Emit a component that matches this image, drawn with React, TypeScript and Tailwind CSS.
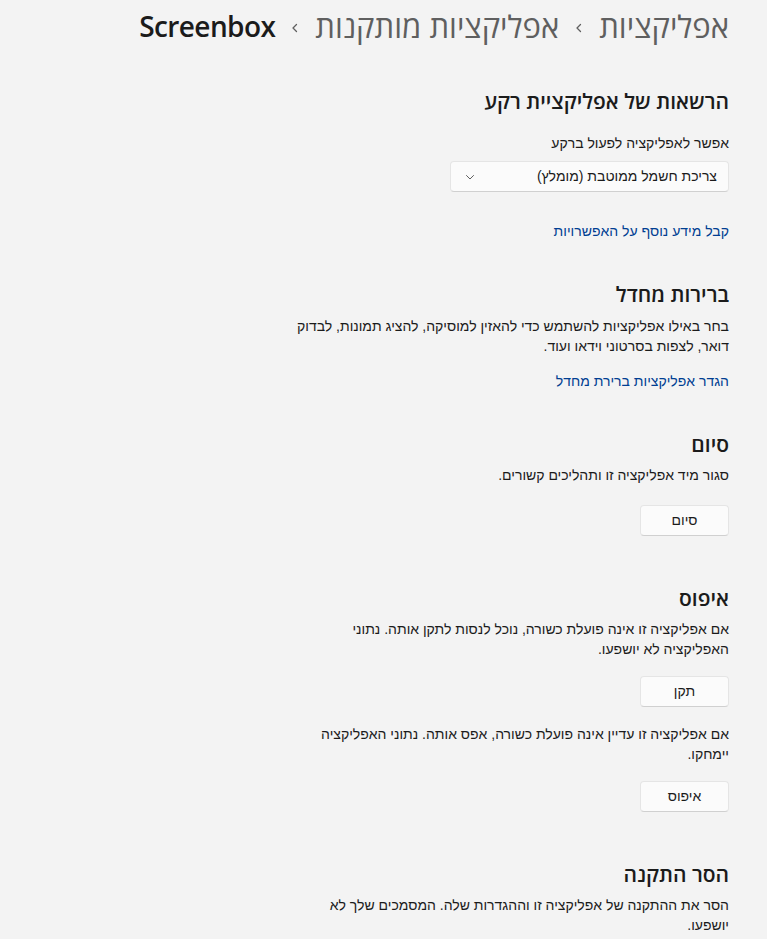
import React from 'react';

const font = { fontFamily: '"Segoe UI", "Liberation Sans", "Open Sans", sans-serif' };
const headFont = { fontFamily: '"Segoe UI", "Open Sans", "Liberation Sans", sans-serif' };

function Crumb() {
    return (
        <svg width="8" height="10" viewBox="0 0 8 10" className="mx-[16px] mt-[4px] shrink-0">
            <path d="M5.5 1.5 L2 5 L5.5 8.5" fill="none" stroke="#5f5f5f" strokeWidth="1.3" strokeLinecap="round" strokeLinejoin="round" />
        </svg>
    );
}

function Button({ children }: { children: React.ReactNode }) {
    return (
        <button className="h-[31px] w-[89px] rounded-[4px] bg-[#fbfbfb] border border-[#e5e5e5] border-b-[#d0d0d0] text-[14px] text-[#1b1b1b]">
            {children}
        </button>
    );
}

function Heading({ children, className }: { children: React.ReactNode; className?: string }) {
    return <h2 style={headFont} className={`text-[21px] leading-[28px] font-semibold text-[#1b1b1b] ${className ?? ''}`}>{children}</h2>;
}

function Text({ children, className }: { children: React.ReactNode; className?: string }) {
    return <p className={`text-[14px] leading-[20px] text-[#1b1b1b] ${className ?? ''}`}>{children}</p>;
}

export default function App() {
    return (
        <div dir="rtl" style={font} className="min-h-[939px] w-full bg-[#f3f3f3] pr-[38px] pl-4 overflow-hidden">
            {/* Breadcrumb header */}
            <div style={headFont} className="flex items-center pt-[8px] h-[44px] text-[31px] leading-[36px] font-medium">
                <span className="text-[#5f5f5f]">אפליקציות</span>
                <Crumb />
                <span className="text-[#5f5f5f]">אפליקציות מותקנות</span>
                <Crumb />
                <span className="text-[#1b1b1b] text-[28px] font-semibold tracking-[-0.6px]">Screenbox</span>
            </div>

            {/* Background permissions */}
            <Heading className="mt-[43px]">הרשאות של אפליקציית רקע</Heading>
            <Text className="mt-[18px]">אפשר לאפליקציה לפעול ברקע</Text>
            <div className="mt-[8px] flex items-center justify-between h-[31px] w-[279px] rounded-[4px] bg-[#fbfbfb] border border-[#e5e5e5] border-b-[#d0d0d0] pr-[11px] pl-[14px]">
                <span className="text-[14px] text-[#1b1b1b]">צריכת חשמל ממוטבת (מומלץ)</span>
                <svg width="10" height="10" viewBox="0 0 10 10">
                    <path d="M1.5 3.5 L5 7 L8.5 3.5" fill="none" stroke="#5f5f5f" strokeWidth="1" strokeLinecap="round" strokeLinejoin="round" />
                </svg>
            </div>
            <a className="block mt-[29px] text-[14px] leading-[20px] text-[#003e92]">קבל מידע נוסף על האפשרויות</a>

            {/* Defaults */}
            <Heading className="mt-[39px]">ברירות מחדל</Heading>
            <Text className="mt-[8px]">בחר באילו אפליקציות להשתמש כדי להאזין למוסיקה, להציג תמונות, לבדוק<br />דואר, לצפות בסרטוני וידאו ועוד.</Text>
            <a className="block mt-[15px] text-[14px] leading-[20px] text-[#003e92]">הגדר אפליקציות ברירת מחדל</a>

            {/* Terminate */}
            <Heading className="mt-[39px]">סיום</Heading>
            <Text className="mt-[7px]">סגור מיד אפליקציה זו ותהליכים קשורים.</Text>
            <div className="mt-[20px]"><Button>סיום</Button></div>

            {/* Reset */}
            <Heading className="mt-[48px]">איפוס</Heading>
            <Text className="mt-[7px]">אם אפליקציה זו אינה פועלת כשורה, נוכל לנסות לתקן אותה. נתוני<br />האפליקציה לא יושפעו.</Text>
            <div className="mt-[17px]"><Button>תקן</Button></div>
            <Text className="mt-[17px]">אם אפליקציה זו עדיין אינה פועלת כשורה, אפס אותה. נתוני האפליקציה<br />יימחקו.</Text>
            <div className="mt-[17px]"><Button>איפוס</Button></div>

            {/* Uninstall */}
            <Heading className="mt-[48px]">הסר התקנה</Heading>
            <Text className="mt-[7px]">הסר את ההתקנה של אפליקציה זו וההגדרות שלה. המסמכים שלך לא<br />יושפעו.</Text>
        </div>
    );
}
